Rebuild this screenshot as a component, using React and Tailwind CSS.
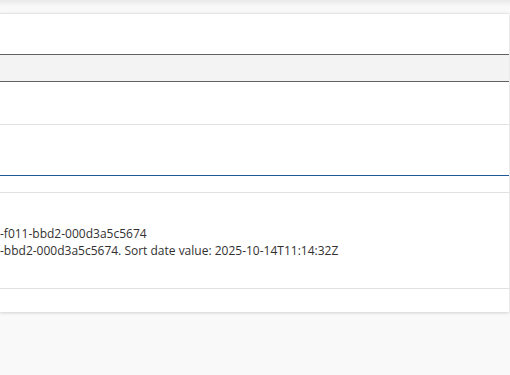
export default function App() {
  return (
    <div className="h-[375px] w-[510px] overflow-hidden bg-[#f9f9f9] font-['Open_Sans',sans-serif]">
      {/* strip above the card, shadowed by the header */}
      <div className="h-[13px] bg-gradient-to-b from-[#e9e9e9] via-[#f9f9f9] to-[#f9f9f9]" />

      <div className="mr-[1px] border-t border-[#e6e6e6] bg-white shadow-[0_1px_3px_rgba(0,0,0,0.16)]">
        <div className="h-[41px] border-b border-[#616161]" />
        <div className="h-[27px] border-b border-[#616161] bg-[#f3f3f3]" />
        <div className="h-[43px] border-b border-[#e1e1e1]" />
        <div className="h-[51px] border-b border-[#1f5a96]" />
        <div className="h-[17px] border-b border-[#e1e1e1]" />
        <div className="h-[96px] border-b border-[#e1e1e1] pt-[32px] text-[12px] leading-[17px] text-[#323130]">
          <div className="whitespace-nowrap">-f011-bbd2-000d3a5c5674</div>
          <div className="whitespace-nowrap">-bbd2-000d3a5c5674. Sort date value: 2025-10-14T11:14:32Z</div>
        </div>
        <div className="h-[23px]" />
      </div>
    </div>
  );
}
